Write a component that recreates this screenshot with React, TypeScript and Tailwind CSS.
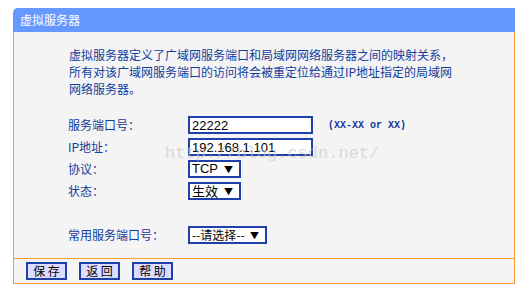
import React from "react";

const cjk = { fontFamily: '"Noto Sans CJK SC", "Noto Sans", sans-serif' };
const arial = { fontFamily: '"Liberation Sans", Arial, sans-serif' };

function Row({ label, children }: { label: string; children?: React.ReactNode }) {
  return (
    <div className="flex h-[22px] items-center">
      <div className="w-[120px] flex-none text-[12px] leading-none text-[#123c9c]">{label}</div>
      {children}
    </div>
  );
}

function Sel({ text, w, font, size }: { text: string; w: string; font?: React.CSSProperties; size?: string }) {
  return (
    <div className={`flex h-[18px] ${w} flex-none items-center justify-between border-2 border-[#1e40a8] bg-white pl-[2px] pr-[6px] text-black`}>
      <span className={`whitespace-nowrap ${size ?? "text-[13px]"} leading-[14px]`} style={font}>{text}</span>
      <span className="flex-none text-[9px] leading-none">▼</span>
    </div>
  );
}

export default function App() {
  return (
    <div className="relative h-[297px] w-[524px] bg-white" style={cjk}>
      <div className="ml-[13px] w-[502px] pt-[8px]">
        <div className="flex h-[24px] items-center rounded-tl-[5px] bg-[#6699ff] pl-[7px] text-[12px] text-white">
          虚拟服务器
        </div>
        <div className="h-[226px] border-x border-[#ff9933] bg-[#f4f4f4] pl-[54px] pt-[14px]">
          <div className="ml-px text-[12px] leading-[17px] text-[#123c9c]">
            <div>虚拟服务器定义了广域网服务端口和局域网网络服务器之间的映射关系，</div>
            <div>所有对该广域网服务端口的访问将会被重定位给通过IP地址指定的局域网</div>
            <div>网络服务器。</div>
          </div>
          <div className="mt-[17px]">
            <Row label="服务端口号：">
              <div className="flex h-[18px] w-[125px] flex-none items-center border-2 border-[#1e40a8] bg-white pl-[2px] text-[13px] leading-none text-black" style={arial}>
                22222
              </div>
              <span className="ml-[15px] text-[10px] font-bold text-[#123c9c]" style={{ fontFamily: '"Liberation Mono", monospace' }}>
                (XX-XX or XX)
              </span>
            </Row>
            <Row label="IP地址：">
              <div className="flex h-[18px] w-[125px] flex-none items-center border-2 border-[#1e40a8] bg-white pl-[2px] text-[13px] leading-none text-black" style={arial}>
                192.168.1.101
              </div>
            </Row>
            <Row label="协议：">
              <Sel text="TCP" w="w-[53px]" font={arial} />
            </Row>
            <Row label="状态：">
              <Sel text="生效" w="w-[53px]" />
            </Row>
            <div className="h-[22px]" />
            <Row label="常用服务端口号：">
              <Sel text="--请选择--" w="w-[79px]" size="text-[12px]" />
            </Row>
          </div>
        </div>
        <div className="flex h-[26px] items-center gap-[12px] border border-[#ff9933] bg-[#f4f4f4] pl-[12px]">
          {["保 存", "返 回", "帮 助"].map((t) => (
            <div
              key={t}
              className="flex h-[18px] w-[41px] items-center justify-center border-2 border-[#1e40a8] bg-[#dcdcff] text-[12px] leading-none text-black"
            >
              {t}
            </div>
          ))}
        </div>
      </div>
      <div
        className="pointer-events-none absolute left-[165px] top-[145px] text-[17px] leading-none text-[#c8c8c8] opacity-60"
        style={{ fontFamily: '"Liberation Mono", monospace' }}
      >
        http://blog.csdn.net/
      </div>
    </div>
  );
}
